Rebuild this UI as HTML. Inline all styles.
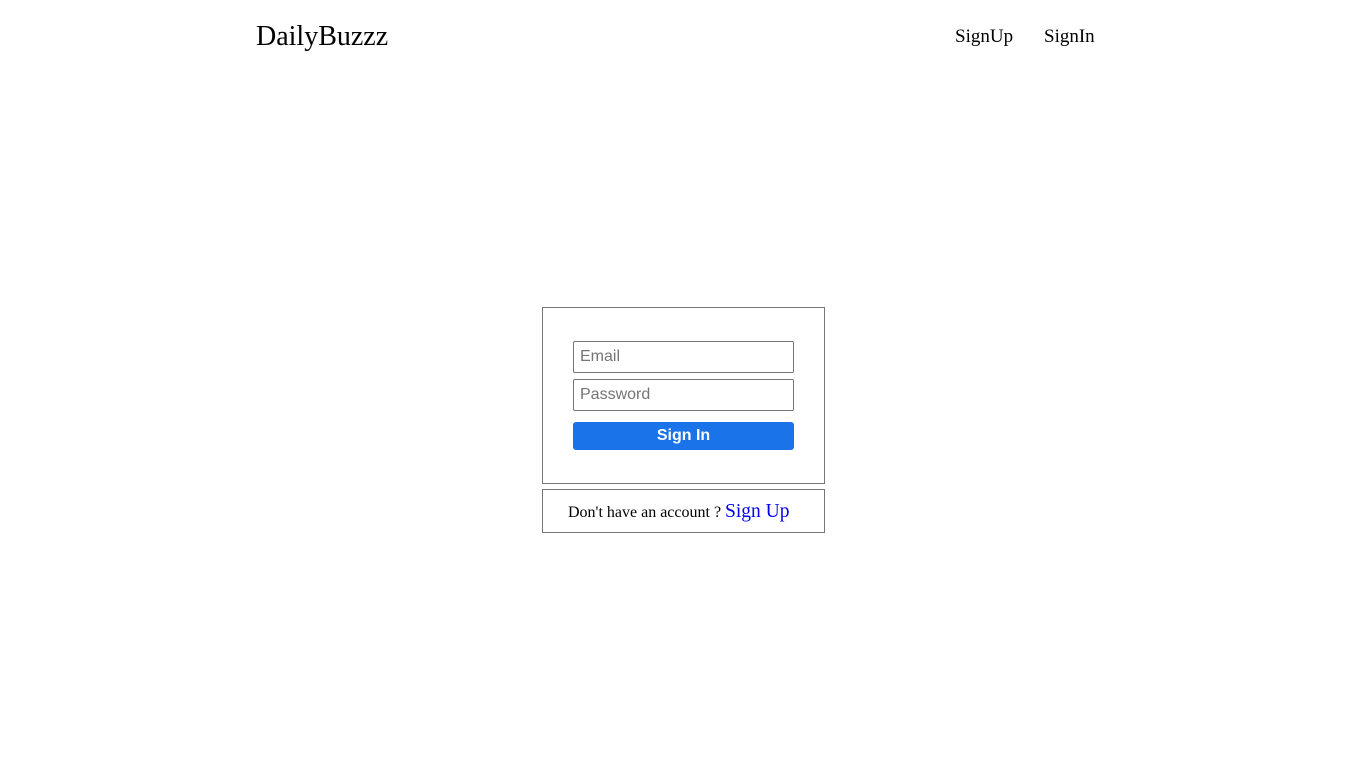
<!DOCTYPE html>
<html><head><style>
body{margin:0;background:#fff;font-family:"Liberation Serif",serif;}
.logo{position:absolute;left:256px;top:21px;font-size:28px;color:#000;}
.nav{position:absolute;top:26px;font-size:19px;}
.box{position:absolute;left:542px;width:281px;border:1px solid #777;}
.inp{position:absolute;left:30px;width:213px;height:30px;border:1px solid #767676;border-radius:2px;font-family:"Liberation Sans",sans-serif;font-size:16px;color:#757575;line-height:29px;padding-left:6px;box-sizing:content-box;}
.btn{position:absolute;left:30px;top:114px;width:221px;height:28px;background:#1a73e8;border-radius:3px;color:#fff;font-family:"Liberation Sans",sans-serif;font-weight:bold;font-size:16px;text-align:center;line-height:28px;}
</style></head><body>
<div class="logo">DailyBuzzz</div>
<div class="nav" style="left:955px">SignUp</div>
<div class="nav" style="left:1044px">SignIn</div>
<div class="box" style="top:307px;height:175px">
<div class="inp" style="top:33px">Email</div>
<div class="inp" style="top:71px">Password</div>
<div class="btn">Sign In</div>
</div>
<div class="box" style="top:489px;height:42px">
<div style="position:absolute;left:25px;top:11px;font-size:16px">Don't have an account ? <span style="color:#00e;font-size:19.5px">Sign Up</span></div>
</div>
</body></html>
